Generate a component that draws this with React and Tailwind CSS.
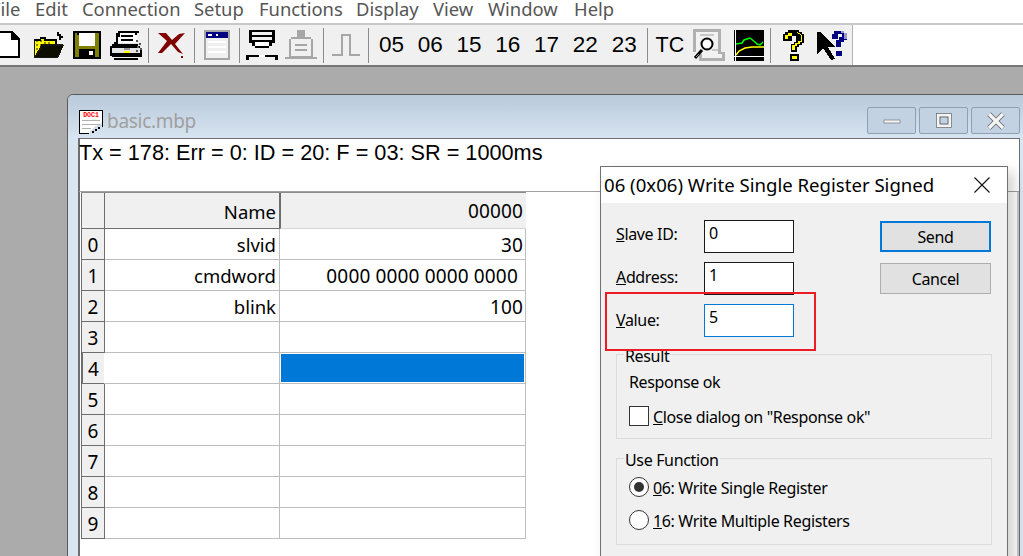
import React from "react";

const menus = [
  ["File", "w-[44px]"],
  ["Edit", "w-[47px]"],
  ["Connection", "w-[112px]"],
  ["Setup", "w-[65px]"],
  ["Functions", "w-[97px]"],
  ["Display", "w-[77px]"],
  ["View", "w-[55px]"],
  ["Window", "w-[86px]"],
  ["Help", "w-[50px]"],
];

const rows = [
  ["0", "slvid", "30"],
  ["1", "cmdword", "0000 0000 0000 0000 "],
  ["2", "blink", "100"],
  ["3", "", ""],
  ["4", "", ""],
  ["5", "", ""],
  ["6", "", ""],
  ["7", "", ""],
  ["8", "", ""],
  ["9", "", ""],
];

const Icon = ({ w, h, className = "", children }) => (
  <svg
    width={w}
    height={h}
    viewBox={`0 0 ${w} ${h}`}
    shapeRendering="crispEdges"
    className={`shrink-0 ${className}`}
  >
    {children}
  </svg>
);

const Sep = () => <div className="w-px h-[35px] bg-[#8c8c8c] shrink-0" />;

const NewIcon = () => (
  <Icon w={21} h={28}>
    <path d="M0 1h13l7 7v19H0z" fill="#fff" />
    <path d="M0 0h14v1h1v1h1v1h1v1h1v1h1v1h1v1h1v20H0v-2h19V9h-7V2H0z" fill="#000" />
  </Icon>
);

const OpenIcon = () => (
  <Icon w={31} h={28}>
    <path d="M18 3h6V1h2v2h2v2h2v2h-2v2h-2V5h-2V3h-6z" fill="#000" />
    <path d="M1 9h6V7h5v2h11v5H9L3 26H1z" fill="#ffff00" />
    <path d="M3 9h2v2H3zM7 9h2v2H7zM11 11h2v2h-2zM15 11h2v2h-2zM3 13h2v2H3zM7 13h2v2H7zM3 17h2v2H3z" fill="#8a8a00" />
    <path d="M9 15h21l-6 11H3z" fill="#808000" />
    <path d="M0 9h1v18h24l6-13h-1v-1H8v1L2 25V9z" fill="#000" opacity="0.9" />
    <path d="M1 8h6V6h6v2h11v5h-2V10H11V8H8v2H1z" fill="#000" />
  </Icon>
);

const SaveIcon = () => (
  <Icon w={28} h={28}>
    <rect width="28" height="28" fill="#000" />
    <rect x="2" y="2" width="24" height="24" fill="#808000" />
    <rect x="6" y="2" width="16" height="13" fill="#fff" />
    <rect x="6" y="18" width="16" height="8" fill="#000" />
    <rect x="16" y="20" width="4" height="4" fill="#fff" />
    <rect x="4" y="2" width="2" height="2" fill="#000" />
  </Icon>
);

const PrintIcon = () => (
  <Icon w={33} h={29}>
    <path d="M9 0h20v2h-2v11H7V2h2z" fill="#fff" />
    <path d="M8 0h21v2h-2v2h-2V2H10v4H8v6h-2V2h2zM11 4h12v2H11zM11 8h12v2H11z" fill="#000" />
    <path d="M4 12h25v2h2v10H2V14h2z" fill="#e4e4e4" />
    <path d="M4 11h4v2h20v2h2v2h2v9H2v3h26v-2H4v2H2v-4H0V15h2v-2h2zM2 17v5h28v-5z" fill="#000" />
    <rect x="14" y="20" width="6" height="2" fill="#ffff00" />
    <rect x="14" y="17" width="6" height="2" fill="#9a9a9a" />
    <path d="M26 9h2v2h-2zM29 12h2v2h-2zM27 15h2v2h-2zM30 17h2v2h-2zM26 19h2v2h-2z" fill="#555" />
  </Icon>
);

const CloseIcon = () => (
  <svg width="29" height="26" viewBox="0 0 29 26" className="shrink-0">
    <path d="M1 1l8 0 6 7 7-6 6-1-10 11 8 10-5-2-7-8-9 9H1l9-12z" fill="#800000" />
    <rect x="24" y="24" width="2" height="2" fill="#800000" />
  </svg>
);

const WindowIcon = () => (
  <Icon w={26} h={30}>
    <rect width="26" height="30" fill="#a6a6a6" />
    <rect x="2" y="2" width="22" height="26" fill="#f0f0f0" />
    <rect x="2" y="2" width="22" height="6" fill="#000080" />
    <path d="M4 4h4v2H4zM12 4h2v2h-2z" fill="#fff" />
    <path d="M4 11h18v2H4zM4 16h18v2H4zM4 21h18v2H4z" fill="#fff" />
  </Icon>
);

const ConnectIcon = () => (
  <Icon w={32} h={30}>
    <path d="M3 0h26v13h-3v3h-3v2H9v-2H6v-3H3z" fill="#000" />
    <rect x="5" y="0" width="22" height="2" fill="#000" />
    <rect x="6" y="2" width="20" height="3" fill="#f0f0f0" />
    <rect x="6" y="7" width="20" height="3" fill="#f0f0f0" />
    <rect x="9" y="12" width="14" height="4" fill="#fff" />
    <path d="M0 25h13v2H3v3H0zM19 25h13v5h-3v-3H19z" fill="#000" />
    <rect x="13" y="25" width="6" height="2" fill="#fff" />
  </Icon>
);

const DisconnectIcon = () => (
  <Icon w={32} h={30}>
    <rect x="12" y="0" width="8" height="7" fill="#a6a6a6" />
    <path d="M6 7h20v2h2v19H4V9h2z" fill="#a6a6a6" />
    <rect x="6" y="9" width="20" height="17" fill="#f0f0f0" />
    <path d="M10 14h12v2H10zM10 19h12v2H10z" fill="#a6a6a6" />
    <rect x="0" y="27" width="32" height="2" fill="#a6a6a6" />
  </Icon>
);

const PulseIcon = () => (
  <Icon w={28} h={24}>
    <path d="M0 21h9V1h10v20h9v2H17V3h-6v20H0z" fill="#a6a6a6" />
  </Icon>
);

const ScopeIcon = () => (
  <Icon w={32} h={32}>
    <path d="M0 0h28v23h4v9H6v-9H0z" fill="#b0b0b0" />
    <path d="M3 3h22v22h4v4H9v-4H3z" fill="#f2f2f2" />
    <path d="M7 5h14v2H7zM19 20h6v2h-6z" fill="#c8c8c8" />
    <circle cx="14" cy="15" r="5.5" fill="#fff" stroke="#000" strokeWidth="2" shapeRendering="auto" />
    <path d="M2 29l7-8" stroke="#000" strokeWidth="3" shapeRendering="auto" />
    <path d="M3 28l3-3" stroke="#9a9a9a" strokeWidth="1" shapeRendering="auto" />
  </Icon>
);

const ChartIcon = () => (
  <Icon w={30} h={31}>
    <rect width="30" height="31" fill="#000" />
    <rect x="1" y="0" width="1" height="31" fill="#fff" />
    <rect x="0" y="26" width="30" height="1" fill="#fff" />
    <path d="M2 14l6-1 2-3 6-2 5 4 2 2 3 1 3-3" fill="none" stroke="#00ff00" strokeWidth="1.5" shapeRendering="auto" />
    <path d="M2 25l3-4 6-3 7-1h12" fill="none" stroke="#ffff00" strokeWidth="1.5" shapeRendering="auto" />
  </Icon>
);

const HelpIcon = () => (
  <Icon w={21} h={31}>
    <path d="M5 0h11v2h3v2h2v9h-2v2h-3v2h-2v5H8v-8h3v-2h2V6H9v5H0V4h2V2h3z" fill="#000" />
    <path d="M6 2h9v2h3v7h-3v2h-3v2H9v5h3v-4h2v-2h3v-2h2V5h-2V3h-3V2zM2 5h3v4H2zM5 3h4v3H5z" fill="#ffff00" />
    <rect x="7" y="24" width="9" height="7" fill="#000" />
    <rect x="9" y="26" width="5" height="3" fill="#ffff00" />
  </Icon>
);

const WhatsThisIcon = () => (
  <Icon w={31} h={30}>
    <path d="M0 2l3 0 16 15h-8l7 12-4 1-8-12-6 7z" fill="#000" />
    <path d="M17 1h10v2h3v7h-3v2h-3v5h-5v-7h3v-3h3V4h-4v5h-6V4h2z" fill="#000080" />
    <path d="M24 1h3v2h3v6h-3V3h-3z" fill="#9a9aca" />
    <rect x="19" y="21" width="6" height="5" fill="#000080" />
  </Icon>
);

const FuncNum = ({ children }) => (
  <span className="w-[38.8px] shrink-0 text-[22.5px] leading-none text-black font-['Liberation_Sans',sans-serif] text-center">
    {children}
  </span>
);

const Toolbar = () => (
  <div className="flex h-[42px] border-t-2 border-[#c8c8c8]">
    <div className="w-[853px] shrink-0 flex items-center bg-[#f0f0f0] border-r border-[#b4b4b4] overflow-hidden">
      <div className="-ml-px"><NewIcon /></div>
      <div className="ml-[13px]"><OpenIcon /></div>
      <div className="ml-[9px]"><SaveIcon /></div>
      <div className="ml-[9px]"><PrintIcon /></div>
      <div className="ml-[5px]"><Sep /></div>
      <div className="ml-[8px]"><CloseIcon /></div>
      <div className="ml-[8px]"><Sep /></div>
      <div className="ml-[9px]"><WindowIcon /></div>
      <div className="ml-[9px]"><Sep /></div>
      <div className="ml-[6px]"><ConnectIcon /></div>
      <div className="ml-[7px]"><DisconnectIcon /></div>
      <div className="ml-[6px]"><Sep /></div>
      <div className="ml-[8px]"><PulseIcon /></div>
      <div className="ml-[8px]"><Sep /></div>
      <div className="ml-[3px] flex">
        {["05", "06", "15", "16", "17", "22", "23"].map((n) => (
          <FuncNum key={n}>{n}</FuncNum>
        ))}
      </div>
      <div className="ml-[3px]"><Sep /></div>
      <span className="ml-[8px] w-[30px] text-[21.5px] leading-none pt-[2px] font-['Liberation_Sans',sans-serif]">TC</span>
      <div className="ml-[7px]"><ScopeIcon /></div>
      <div className="ml-[9px]"><ChartIcon /></div>
      <div className="ml-[6px]"><Sep /></div>
      <div className="ml-[12px]"><HelpIcon /></div>
      <div className="ml-[13px]"><WhatsThisIcon /></div>
    </div>
    <div className="flex-1 bg-white" />
  </div>
);

const GridTable = () => (
  <div className="w-[445px] ml-px text-[19px] text-black">
    <div className="flex h-[37px] border-t border-[#8c8c8c]">
      <div className="w-[24px] bg-[#f0f0f0] border-x border-[#6e6e6e] border-b" />
      <div className="w-[175px] bg-[#f0f0f0] border-b border-r border-[#6e6e6e] flex items-center justify-end pr-[3px] pt-[2px] text-[18.5px]">
        Name
      </div>
      <div className="flex-1 bg-[#f0f0f0] border-l border-[#6e6e6e] border-b border-b-[#d8d8d8] flex items-center justify-end pr-[3px] pt-[2px] tracking-[0.15px]">
        00000
      </div>
    </div>
    {rows.map(([num, name, value]) => {
      const active = num === "4";
      return (
        <div key={num} className="flex h-[31px]">
          <div
            className={`w-[24px] bg-[#f0f0f0] border-b border-[#6e6e6e] flex items-center justify-center pt-[2px] ${
              active ? "border-l-2 border-l-[#6e6e6e] border-r border-r-white" : "border-x border-x-[#6e6e6e]"
            }`}
          >
            {num}
          </div>
          <div className="w-[175px] border-b border-r border-[#bdbdbd] flex items-center justify-end pr-[3px] pt-[2px] text-[18.5px]">
            {name}
          </div>
          {active ? (
            <div className="flex-1 border-b border-r border-[#bdbdbd] p-px">
              <div className="h-full bg-[#0078d7]" />
            </div>
          ) : (
            <div className="flex-1 border-b border-r border-[#bdbdbd] flex items-center justify-end pr-[2px] pt-[2px] whitespace-pre tracking-[0.15px]">
              {value}
            </div>
          )}
        </div>
      );
    })}
  </div>
);

const Field = ({ label, rest, value, focused, labelClass }) => (
  <div className="flex items-center">
    <span className={`w-[88px] ${labelClass}`}>
      <u>{label}</u>
      {rest}
    </span>
    <div
      className={`w-[90px] h-[33px] bg-white border pl-[4px] leading-[25px] ${
        focused ? "border-[#0078d7]" : "border-[#1a1a1a]"
      }`}
    >
      {value}
    </div>
  </div>
);

const RadioRow = ({ checked, hot, rest, className = "" }) => (
  <div className={`flex items-center gap-[4px] h-[20px] ${className}`}>
    <span className="w-[20px] h-[20px] rounded-full bg-white border border-[#333] flex items-center justify-center">
      {checked && <span className="w-[10px] h-[10px] rounded-full bg-[#333]" />}
    </span>
    <span className="pt-[2px]">
      <u>{hot}</u>
      {rest}
    </span>
  </div>
);

const Dialog = () => (
  <div className="absolute left-[600px] top-[166px] w-[408px] h-[420px] bg-[#f0f0f0] border border-[#707070] shadow-[6px_6px_12px_rgba(0,0,0,0.18)] text-[16px] tracking-[-0.35px] text-black">
    <div className="h-[36px] bg-white flex items-center justify-between pl-[3px] pr-[16px]">
      <span className="text-[18.6px] tracking-normal">06 (0x06) Write Single Register Signed</span>
      <svg width="18" height="18" viewBox="0 0 18 18" className="shrink-0">
        <path d="M1.5 1.5l15 15M16.5 1.5l-15 15" stroke="#111" strokeWidth="1.1" fill="none" />
      </svg>
    </div>
    <div className="pl-[15px] pr-[15px] pt-[17px]">
      <div className="flex justify-between pr-px">
        <div className="flex flex-col gap-[9px]">
          <Field label="S" rest="lave ID:" value="0" labelClass="pb-[6px]" />
          <Field label="A" rest="ddress:" value="1" labelClass="pb-[4px]" />
          <Field label="V" rest="alue:" value="5" focused labelClass="pb-[2px]" />
        </div>
        <div className="flex flex-col gap-[11px] pt-[1px]">
          <button className="w-[111px] h-[31px] bg-[#e1e1e1] border-2 border-[#0078d7] pt-[1px]">Send</button>
          <button className="w-[111px] h-[31px] bg-[#e1e1e1] border border-[#adadad] pt-[1px]">Cancel</button>
        </div>
      </div>
      <fieldset className="relative mt-[17px] h-[85px] border border-[#dcdcdc] px-[12px]">
        <legend className="absolute -top-[8px] left-[7px] bg-[#f0f0f0] px-px leading-[18px]">Result</legend>
        <div className="pt-[15px] leading-[24px]">Response ok</div>
        <label className="mt-[12px] flex items-center gap-[4px] h-[20px]">
          <span className="w-[20px] h-[20px] bg-white border border-[#333]" />
          <span className="pt-[2px]">
            <u>C</u>lose dialog on "Response ok"
          </span>
        </label>
      </fieldset>
      <fieldset className="relative mt-[19px] h-[87px] border border-[#dcdcdc] px-[12px]">
        <legend className="absolute -top-[8px] left-[7px] bg-[#f0f0f0] px-px leading-[18px]">Use Function</legend>
        <RadioRow className="mt-[18px]" checked hot="0" rest="6: Write Single Register" />
        <RadioRow className="mt-[13px]" hot="1" rest="6: Write Multiple Registers" />
      </fieldset>
    </div>
  </div>
);

const CaptionBtn = ({ children }) => (
  <div className="w-[49px] h-[27px] rounded-[2px] border border-[#8fa0b4] bg-[#c3d2e3]">
    <svg width="47" height="25" viewBox="0 0 47 25">{children}</svg>
  </div>
);

const DocWindow = () => (
  <div className="absolute left-[67px] top-[94px] w-[980px] h-[520px] rounded-tl-[6px] border border-[#5a5a5a] bg-[#d9e5f1] pl-[10px] pr-[26px] flex flex-col">
    <div className="h-[43px] shrink-0 flex bg-gradient-to-b from-[#b9c9da] to-[#d7e4f1] -ml-[10px] -mr-[26px] pl-[11px] pr-[26px] rounded-tl-[6px]">
      <div className="flex items-center gap-[4px] pt-[10px] flex-1">
        <svg width="24" height="24" viewBox="0 0 24 24" shapeRendering="crispEdges" className="shrink-0">
          <path d="M0 0h24v13l-4 1-6 4-3 4-1 2H0z" fill="#fff" />
          <path d="M0 0h24v15h-1V1H1v22h9v1H0z" fill="#000" />
          <text x="12" y="7" textAnchor="middle" fontSize="6.5" fontWeight="700" fill="#f00" fontFamily="'Liberation Mono', monospace">DOC1</text>
          <path d="M3 10h18v1H3zM3 14h18v1H3zM3 18h9v1H3z" fill="#b0b0b0" />
          <path d="M10 23h3v-2h3v-2h3v-2h4v-2h1v2h-3v2h-3v2h-3v2h-5z" fill="#000" />
        </svg>
        <span className="text-[19px] tracking-[-0.3px] text-[#a0a0a0]">basic.mbp</span>
      </div>
      <div className="flex gap-[3px] pt-[12px]">
        <CaptionBtn>
          <rect x="16" y="12" width="16" height="3" fill="#f4f4f4" stroke="#666" strokeWidth="0.6" />
        </CaptionBtn>
        <CaptionBtn>
          <rect x="18" y="7" width="12" height="11" fill="none" stroke="#f4f4f4" strokeWidth="3" />
          <rect x="16.5" y="5.5" width="15" height="14" fill="none" stroke="#666" strokeWidth="0.7" />
          <rect x="20" y="9" width="8" height="7" fill="none" stroke="#555" strokeWidth="0.8" />
        </CaptionBtn>
        <CaptionBtn>
          <path d="M17 6l14 14M31 6L17 20" stroke="#666" strokeWidth="5" fill="none" />
          <path d="M17 6l14 14M31 6L17 20" stroke="#f4f4f4" strokeWidth="3.4" fill="none" />
        </CaptionBtn>
      </div>
    </div>
    <div className="flex-1 bg-white border-l-2 border-t border-r border-[#6e6e6e] flex flex-col">
      <div className="h-[53px] shrink-0 border-b border-[#a0a0a0] text-[21.7px] text-black leading-[27px] -ml-[1px] font-['Liberation_Sans',sans-serif]">
        Tx = 178: Err = 0: ID = 20: F = 03: SR = 1000ms
      </div>
      <div className="flex-1 border-r-2 border-[#c8c8c8]">
        <GridTable />
      </div>
    </div>
  </div>
);

const App = () => (
  <div className="relative w-[1023px] h-[556px] overflow-hidden bg-[#ababab] font-['Noto_Sans',sans-serif]">
    <div className="h-[23px] bg-white flex items-start -ml-[9px] text-[18.4px] text-[#555]">
      {menus.map(([name, width]) => (
        <span key={name} className={`${width} shrink-0 leading-[18px]`}>
          {name}
        </span>
      ))}
    </div>
    <Toolbar />
    <div className="h-[2px] bg-[#777]" />
    <DocWindow />
    <Dialog />
    <div className="absolute left-[605px] top-[292px] w-[211px] h-[59px] border-2 border-[#ed1c24]" />
  </div>
);

export default App;
